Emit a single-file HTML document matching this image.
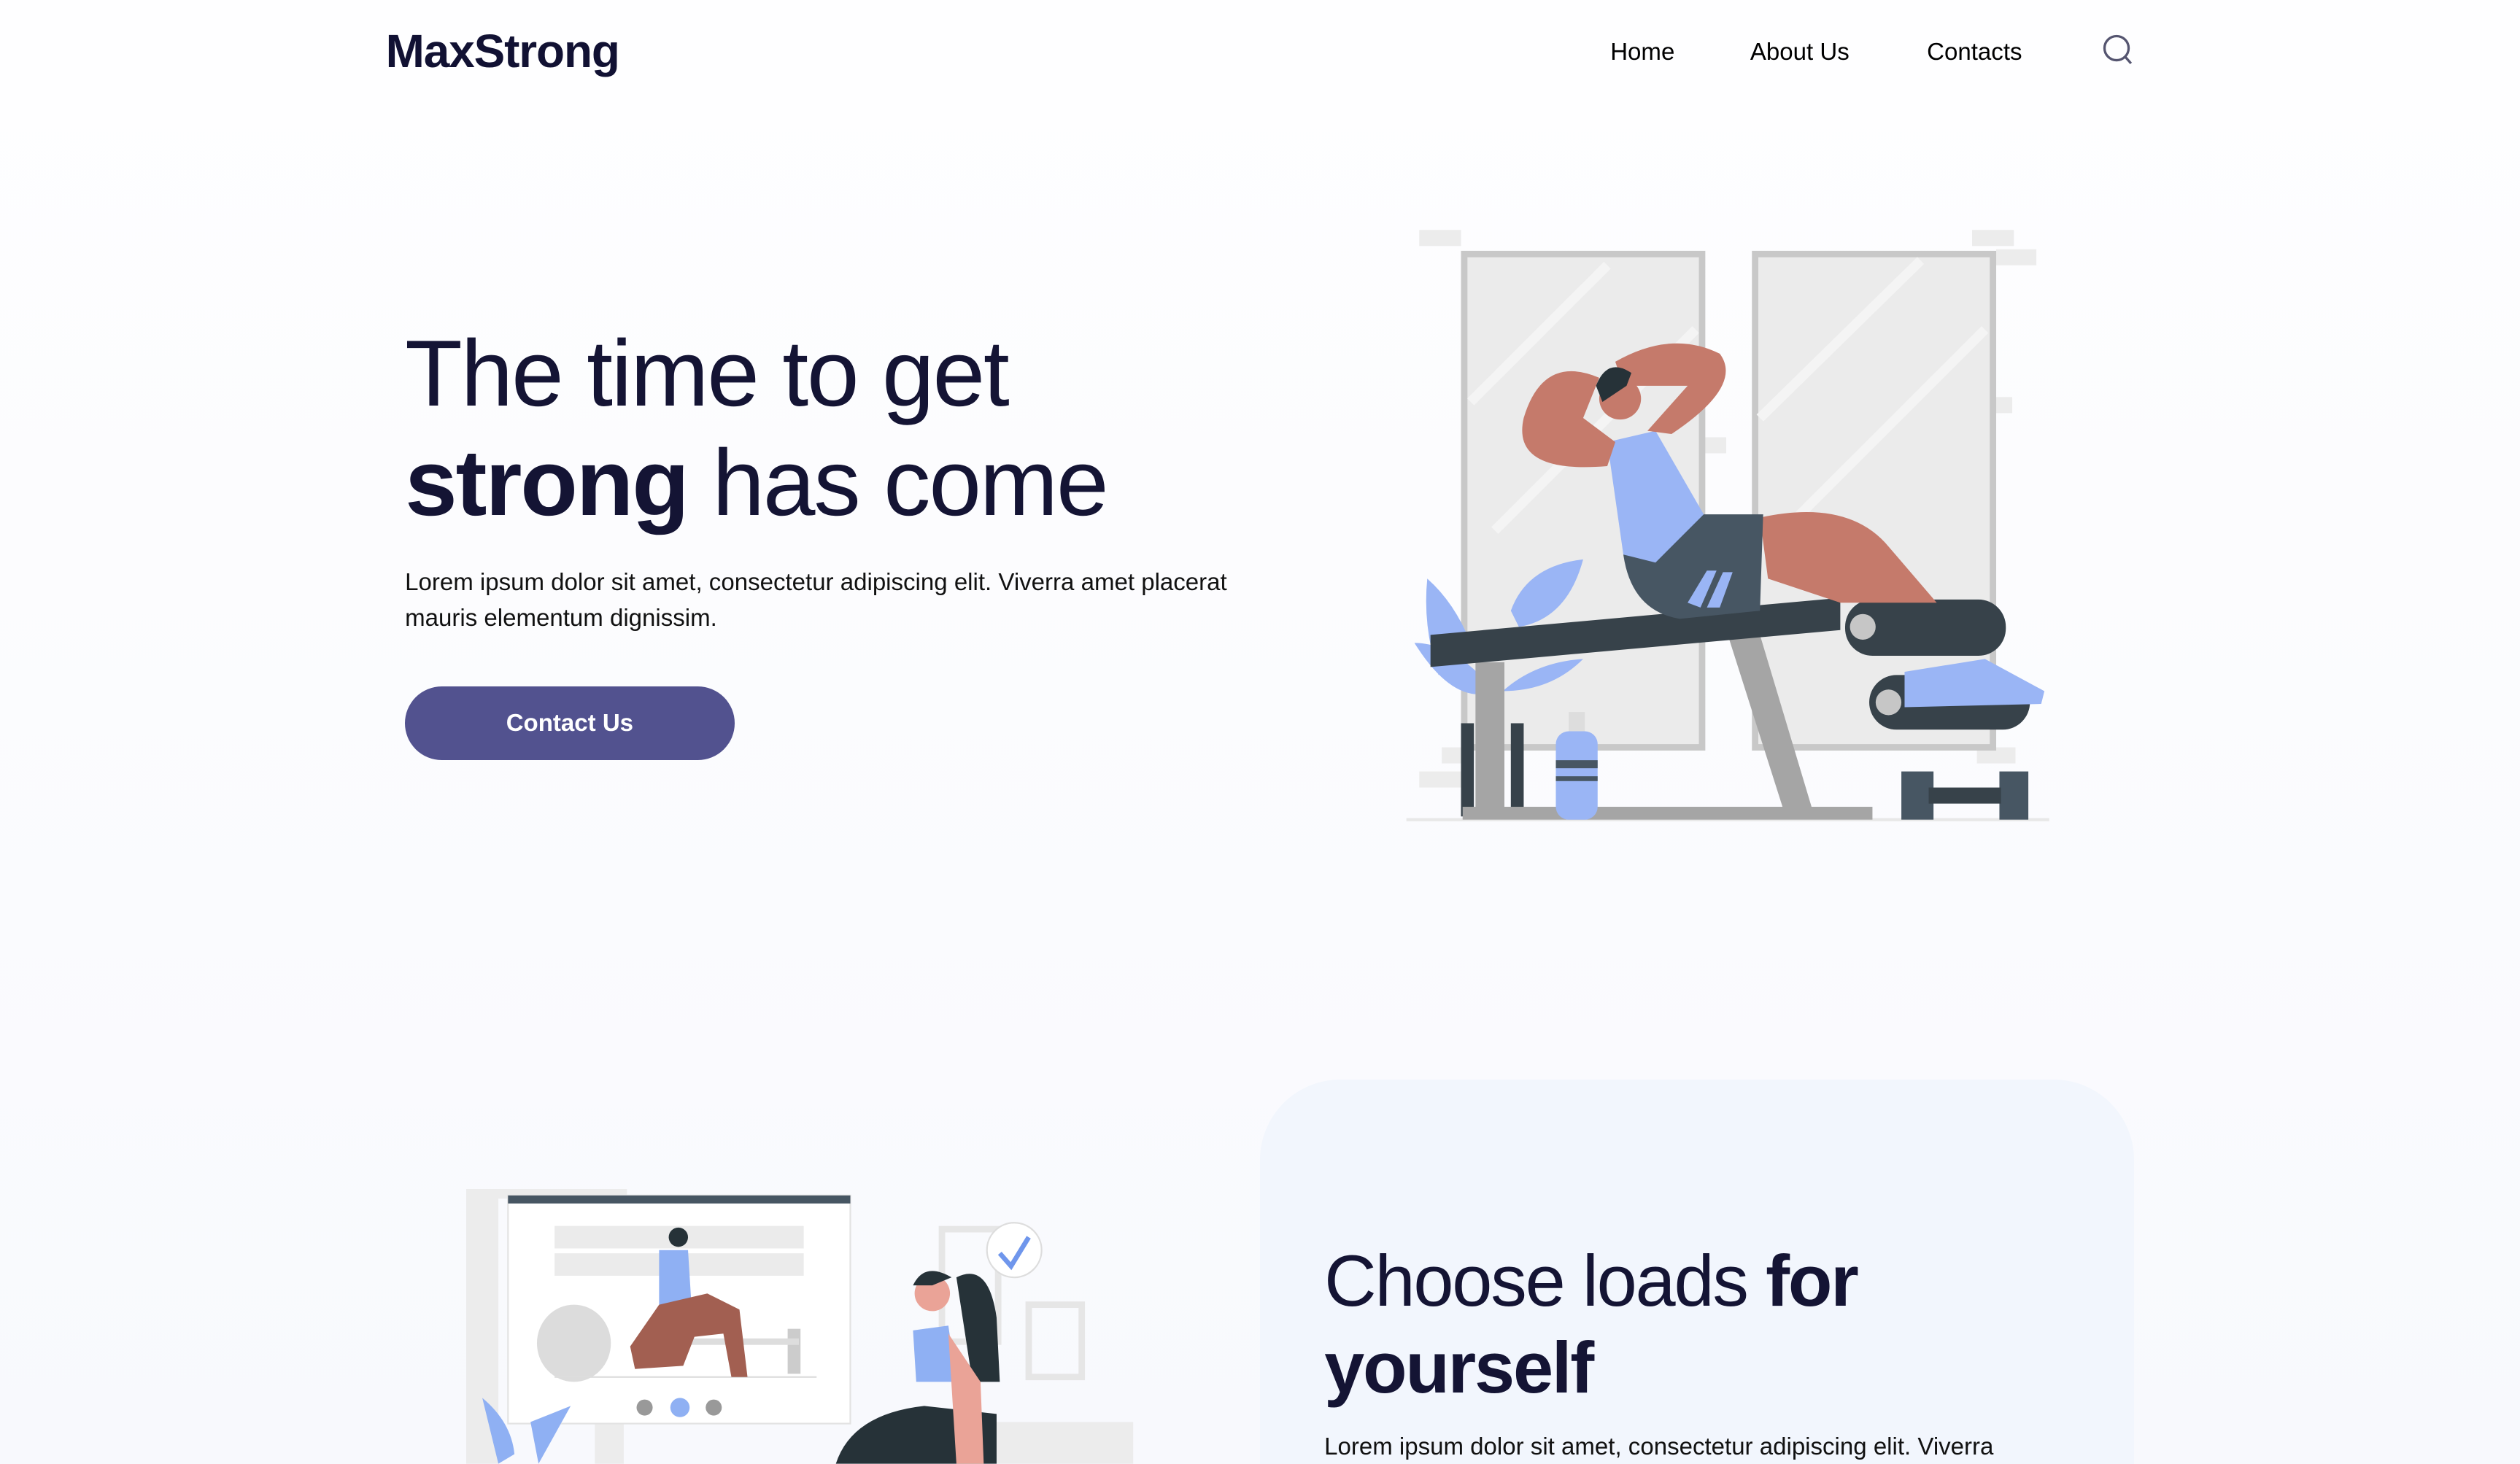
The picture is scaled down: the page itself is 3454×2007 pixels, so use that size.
<!DOCTYPE html>
<html><head><meta charset="utf-8"><style>
html{zoom:2.2028;background:#f8f9fd;overflow:hidden;height:911px}
*{margin:0;padding:0;box-sizing:border-box}
body{width:1568px;height:911px;overflow:hidden;background:linear-gradient(#fefeff,#f8f9fd);font-family:"Liberation Sans",sans-serif;color:#141434;position:relative}
.abs{position:absolute}
.logo{left:240px;top:15px;font-size:29px;font-weight:bold;letter-spacing:-0.5px;color:#111133}
.nav{top:24px;font-size:15px;color:#000}
h1{position:absolute;left:252px;top:199px;font-size:58.5px;line-height:68px;font-weight:normal;letter-spacing:-1px;color:#141434}
h1 b,h2 b{font-weight:bold}
.p{font-size:15px;line-height:22px;color:#111}
.btn{left:252px;top:427px;width:205px;height:46px;border-radius:23px;background:#52528f;color:#fff;font-weight:bold;font-size:15px;text-align:center;line-height:46px}
.card{left:784px;top:672px;width:544px;height:239px;background:#f2f6fd;border-radius:50px 50px 0 0}
h2{position:absolute;left:824px;top:771px;font-size:45px;line-height:54px;font-weight:normal;letter-spacing:-1px;color:#141434}
</style></head><body>
<div class="abs logo">MaxStrong</div>
<div class="abs nav" style="left:1002px">Home</div>
<div class="abs nav" style="left:1089px">About Us</div>
<div class="abs nav" style="left:1199px">Contacts</div>
<svg class="abs" style="left:1307px;top:20px" width="22" height="22" viewBox="0 0 22 22"><circle cx="10" cy="10" r="7.5" fill="none" stroke="#555570" stroke-width="1.5"/><line x1="15.5" y1="15.5" x2="19" y2="19.5" stroke="#555570" stroke-width="1.5"/></svg>

<h1>The time to get<br><b>strong</b> has come</h1>
<div class="abs p" style="left:252px;top:352px;width:540px">Lorem ipsum dolor sit amet, consectetur adipiscing elit. Viverra amet placerat mauris elementum dignissim.</div>
<div class="abs btn">Contact Us</div>

<svg class="abs" style="left:862px;top:127px" width="436" height="400" viewBox="862 127 436 400">
<g fill="#ececec"><rect x="883" y="143" width="26" height="10"/><rect x="1227" y="143" width="26" height="10"/><rect x="1242" y="155" width="25" height="10"/><rect x="883" y="480" width="26" height="10"/><rect x="897" y="465" width="20" height="10"/><rect x="1230" y="465" width="24" height="10"/><rect x="1060" y="272" width="14" height="10"/><rect x="1240" y="247" width="12" height="10"/></g>
<rect x="911" y="158" width="148" height="307" fill="#ebebeb" stroke="#c8c8c8" stroke-width="4"/>
<rect x="1092" y="158" width="148" height="307" fill="#ebebeb" stroke="#c8c8c8" stroke-width="4"/>
<g stroke="#f4f4f4" stroke-width="6"><line x1="915" y1="250" x2="1000" y2="165"/><line x1="930" y1="330" x2="1055" y2="205"/><line x1="1095" y1="260" x2="1195" y2="162"/><line x1="1100" y1="340" x2="1235" y2="205"/></g>
<line x1="875" y1="510" x2="1275" y2="510" stroke="#e8e8e8" stroke-width="2"/>
<path d="M888 360 Q905 375 915 400 L895 420 Q885 390 888 360 Z M940 380 Q950 352 985 348 Q975 385 945 390 Z M880 400 Q905 400 930 430 Q905 440 880 400 Z M985 410 Q965 430 935 430 Q955 412 985 410 Z" fill="#9ab5f5"/>
<rect x="909" y="450" width="8" height="58" fill="#37424a"/><rect x="940" y="450" width="8" height="58" fill="#37424a"/>
<rect x="918" y="412" width="18" height="95" fill="#a5a5a5"/>
<path d="M1075 395 L1095 395 L1128 505 L1110 505 Z" fill="#a5a5a5"/>
<rect x="910" y="502" width="255" height="8" fill="#a5a5a5"/>
<path d="M890 395 L1145 372 L1145 392 L890 415 Z" fill="#37424a"/>
<rect x="968" y="455" width="26" height="55" rx="8" fill="#9ab5f5"/><rect x="976" y="443" width="10" height="12" fill="#ddd"/><rect x="968" y="473" width="26" height="5" fill="#475663"/><rect x="968" y="483" width="26" height="3" fill="#475663"/>
<rect x="1183" y="480" width="20" height="30" fill="#475663"/><rect x="1244" y="480" width="18" height="30" fill="#475663"/><rect x="1200" y="490" width="45" height="10" fill="#37424a"/>
<rect x="1148" y="373" width="100" height="35" rx="17" fill="#37424a"/><circle cx="1159" cy="390" r="8" fill="#c6c6c6"/>
<rect x="1163" y="420" width="100" height="34" rx="17" fill="#37424a"/><circle cx="1175" cy="437" r="8" fill="#c6c6c6"/>
<path d="M1185 418 L1235 410 L1272 430 L1270 438 L1185 440 Z" fill="#9ab5f5"/>
<path d="M1095 322 Q1150 310 1175 340 L1205 375 L1145 375 L1100 360 Z" fill="#c57a6b"/>
<path d="M1010 345 L1060 320 L1097 320 L1095 380 L1045 385 Q1015 380 1010 345 Z" fill="#475663"/>
<path d="M1000 275 L1030 268 L1060 320 L1030 350 L1010 345 Z" fill="#9ab5f5"/>
<path d="M1050 375 L1062 355 L1068 355 L1058 378 Z M1062 378 L1072 356 L1078 356 L1070 378 Z" fill="#9ab5f5"/>
<path d="M1000 290 Q940 295 948 260 Q960 220 995 235 L985 260 L1005 275 Z" fill="#c57a6b"/>
<path d="M1005 225 Q1040 205 1070 220 Q1085 240 1040 270 L1025 268 L1050 240 L1010 240 Z" fill="#c57a6b"/>
<circle cx="1008" cy="248" r="13" fill="#c57a6b"/><path d="M993 240 Q1000 222 1015 232 L1012 240 L997 250 Z" fill="#263238"/>
</svg>

<div class="abs card"></div>
<h2>Choose loads <b>for</b><br><b>yourself</b></h2>
<div class="abs p" style="left:824px;top:890px;width:460px">Lorem ipsum dolor sit amet, consectetur adipiscing elit. Viverra</div>

<svg class="abs" style="left:280px;top:735px" width="430" height="176" viewBox="280 735 430 176">
<rect x="290" y="740" width="20" height="171" fill="#ececec"/><rect x="305" y="740" width="85" height="6" fill="#ececec"/><rect x="370" y="880" width="18" height="31" fill="#ececec"/>
<rect x="586" y="765" width="35" height="70" fill="none" stroke="#e6e6e6" stroke-width="4"/>
<rect x="640" y="812" width="33" height="45" fill="none" stroke="#e6e6e6" stroke-width="4"/>
<rect x="620" y="885" width="85" height="26" fill="#ececec"/>
<rect x="316" y="744" width="213" height="142" fill="#fff" stroke="#e3e3e3"/><rect x="316" y="744" width="213" height="5" fill="#475663"/>
<g fill="#ebebeb"><rect x="345" y="763" width="155" height="14"/><rect x="345" y="780" width="155" height="14"/></g>
<ellipse cx="357" cy="836" rx="23" ry="24" fill="#dcdcdc"/>
<line x1="345" y1="857" x2="508" y2="857" stroke="#ddd"/><rect x="490" y="827" width="8" height="28" fill="#ccc"/><rect x="412" y="833" width="85" height="4" fill="#ddd"/>
<path d="M410 778 L428 778 L430 810 L410 812 Z" fill="#8fb0f3"/>
<path d="M410 812 L440 805 L460 815 L465 857 L455 857 L450 830 L432 832 L425 850 L395 852 L392 838 Z" fill="#a25f51"/>
<circle cx="422" cy="770" r="6" fill="#263238"/>
<circle cx="401" cy="876" r="5" fill="#999"/><circle cx="423" cy="876" r="6" fill="#8fb0f3"/><circle cx="444" cy="876" r="5" fill="#999"/>
<path d="M300 870 Q318 885 320 905 L310 911 Z M330 885 L355 875 L335 911 Z" fill="#8fb0f3"/>
<circle cx="631" cy="778" r="17" fill="#fff" stroke="#ddd"/><path d="M622 780 L629 788 L640 770" stroke="#6f96ec" stroke-width="3" fill="none"/>
<path d="M595 795 Q615 785 620 820 L622 860 L605 860 Z" fill="#263238"/>
<circle cx="580" cy="805" r="11" fill="#eaa397"/><path d="M568 800 Q575 785 592 795 L580 800 Z" fill="#263238"/>
<path d="M568 828 L590 825 L595 860 L570 860 Z" fill="#8fb0f3"/>
<path d="M520 911 Q530 880 575 875 L620 880 L620 911 Z" fill="#263238"/>
<path d="M590 830 L610 860 L612 911 L595 911 Z" fill="#eaa397"/>
</svg>
</body></html>
